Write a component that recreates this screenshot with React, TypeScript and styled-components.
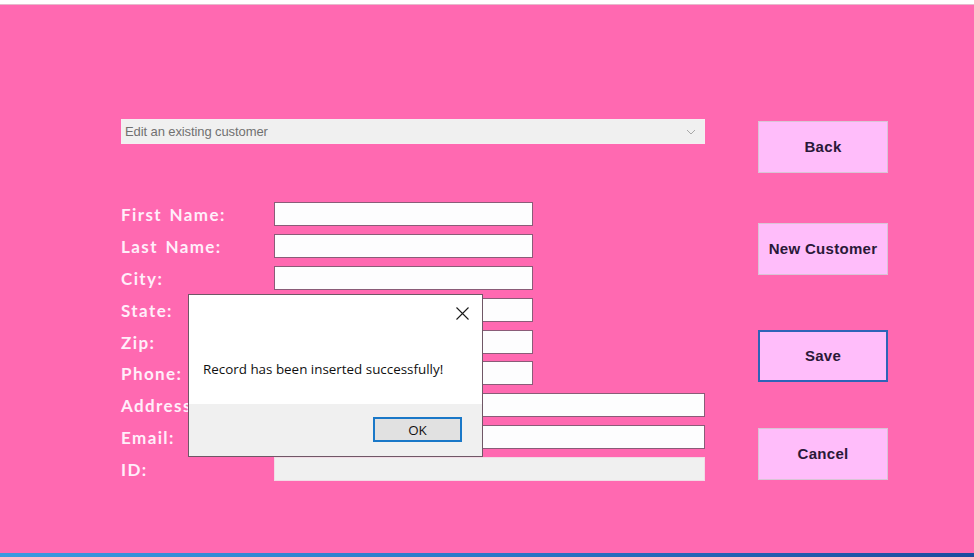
import React from "react";
import styled, { createGlobalStyle } from "styled-components";

const Global = createGlobalStyle`
  html, body { margin: 0; padding: 0; background: #ffffff; }
  body { width: 974px; height: 557px; overflow: hidden; }
  * { box-sizing: border-box; }
`;

const Window = styled.div`
  position: relative;
  width: 974px;
  height: 557px;
  display: flex;
  flex-direction: column;
  background: #ffffff;
`;

const TopStrip = styled.div`
  height: 5px;
  background: #ffffff;
  border-bottom: 1px solid #e6b8cc;
`;

const Main = styled.div`
  flex: 1;
  background: #ff69b1;
  padding: 114px 0 0 121px;
  display: grid;
  grid-template-columns: 584px 130px;
  column-gap: 53px;
  align-items: start;
`;

const TaskBar = styled.div`
  height: 4px;
  background: linear-gradient(90deg, #3a9ae0 0%, #2a78c8 50%, #1d4b9e 100%);
`;

const LeftCol = styled.div`
  display: flex;
  flex-direction: column;
`;

const Combo = styled.div`
  height: 25px;
  background: #f0f0f0;
  border: 1px solid #f6eef2;
  display: flex;
  align-items: center;
  justify-content: space-between;
  padding: 0 8px 0 3px;
  font-family: "Liberation Sans", Arial, sans-serif;
  font-size: 13px;
  color: #707070;
  letter-spacing: -0.1px;
`;

const Chevron = styled.svg`
  width: 10px;
  height: 6px;
`;

const Form = styled.div`
  margin-top: 58px;
  display: grid;
  grid-template-columns: 153px auto;
  grid-auto-rows: 24px;
  row-gap: 7.9px;
  align-items: center;
`;

const Label = styled.label`
  font-family: "Comic Sans MS", "Lato", sans-serif;
  font-weight: 700;
  font-size: 17px;
  color: #ffeefa;
  letter-spacing: 1.4px;
  word-spacing: 2px;
  white-space: nowrap;
  padding-top: 1px;
`;

const Input = styled.div<{ $wide?: boolean; $disabled?: boolean }>`
  width: ${(p) => (p.$wide ? "431px" : "259px")};
  height: 24px;
  background: ${(p) => (p.$disabled ? "#f0f0f0" : "#fdfdfe")};
  border: 1px solid ${(p) => (p.$disabled ? "#f2dbe6" : "#8a5c78")};
`;

const RightCol = styled.div`
  display: flex;
  flex-direction: column;
  padding-top: 2px;
`;

const Button = styled.button<{ $mt: number; $focused?: boolean }>`
  margin-top: ${(p) => p.$mt}px;
  width: 130px;
  height: 52px;
  background: #ffbdfa;
  border: ${(p) => (p.$focused ? "2px solid #2f63b8" : "1px solid #d9c4d6")};
  font-family: "Liberation Sans", Arial, sans-serif;
  font-weight: 700;
  font-size: 15px;
  letter-spacing: 0.3px;
  color: #2a1838;
  padding: 0 0 2px 0;
  cursor: pointer;
`;

const Dialog = styled.div`
  position: absolute;
  left: 188px;
  top: 294px;
  width: 295px;
  height: 163px;
  border: 1px solid #6f5766;
  background: #ffffff;
  display: flex;
  flex-direction: column;
`;

const DialogBody = styled.div`
  position: relative;
  height: 109px;
  background: #ffffff;
  padding: 65px 0 0 14px;
  font-family: "Open Sans", "Noto Sans", sans-serif;
  font-size: 13.4px;
  color: #101010;
`;

const CloseBtn = styled.svg`
  position: absolute;
  right: 13px;
  top: 12px;
  width: 13px;
  height: 13px;
`;

const DialogFooter = styled.div`
  flex: 1;
  background: #f0f0f0;
  padding: 13px 0 0 184px;
`;

const OkButton = styled.button`
  width: 89px;
  height: 25px;
  background: #e1e1e1;
  border: 2px solid #1a78c8;
  font-family: "Open Sans", "Noto Sans", sans-serif;
  font-size: 13.4px;
  color: #111;
  padding: 0;
`;

const shortFields = ["First Name:", "Last Name:", "City:", "State:", "Zip:", "Phone:"];

export default function App() {
  return (
    <>
      <Global />
      <Window>
        <TopStrip />
        <Main>
          <LeftCol>
            <Combo>
              <span>Edit an existing customer</span>
              <Chevron viewBox="0 0 10 6">
                <path d="M1 1 L5 5 L9 1" fill="none" stroke="#a8a8a8" strokeWidth="1" />
              </Chevron>
            </Combo>
            <Form>
              {shortFields.map((f) => (
                <React.Fragment key={f}>
                  <Label>{f}</Label>
                  <Input />
                </React.Fragment>
              ))}
              <Label>Address:</Label>
              <Input $wide />
              <Label>Email:</Label>
              <Input $wide />
              <Label>ID:</Label>
              <Input $wide $disabled />
            </Form>
          </LeftCol>
          <RightCol>
            <Button $mt={0}>Back</Button>
            <Button $mt={50}>New Customer</Button>
            <Button $mt={55} $focused>Save</Button>
            <Button $mt={46}>Cancel</Button>
          </RightCol>
        </Main>
        <TaskBar />
        <Dialog>
          <DialogBody>
            Record has been inserted successfully!
            <CloseBtn viewBox="0 0 13 13">
              <path d="M0.5 0.5 L12.5 12.5 M12.5 0.5 L0.5 12.5" stroke="#1a1a1a" strokeWidth="1.1" />
            </CloseBtn>
          </DialogBody>
          <DialogFooter>
            <OkButton>OK</OkButton>
          </DialogFooter>
        </Dialog>
      </Window>
    </>
  );
}
